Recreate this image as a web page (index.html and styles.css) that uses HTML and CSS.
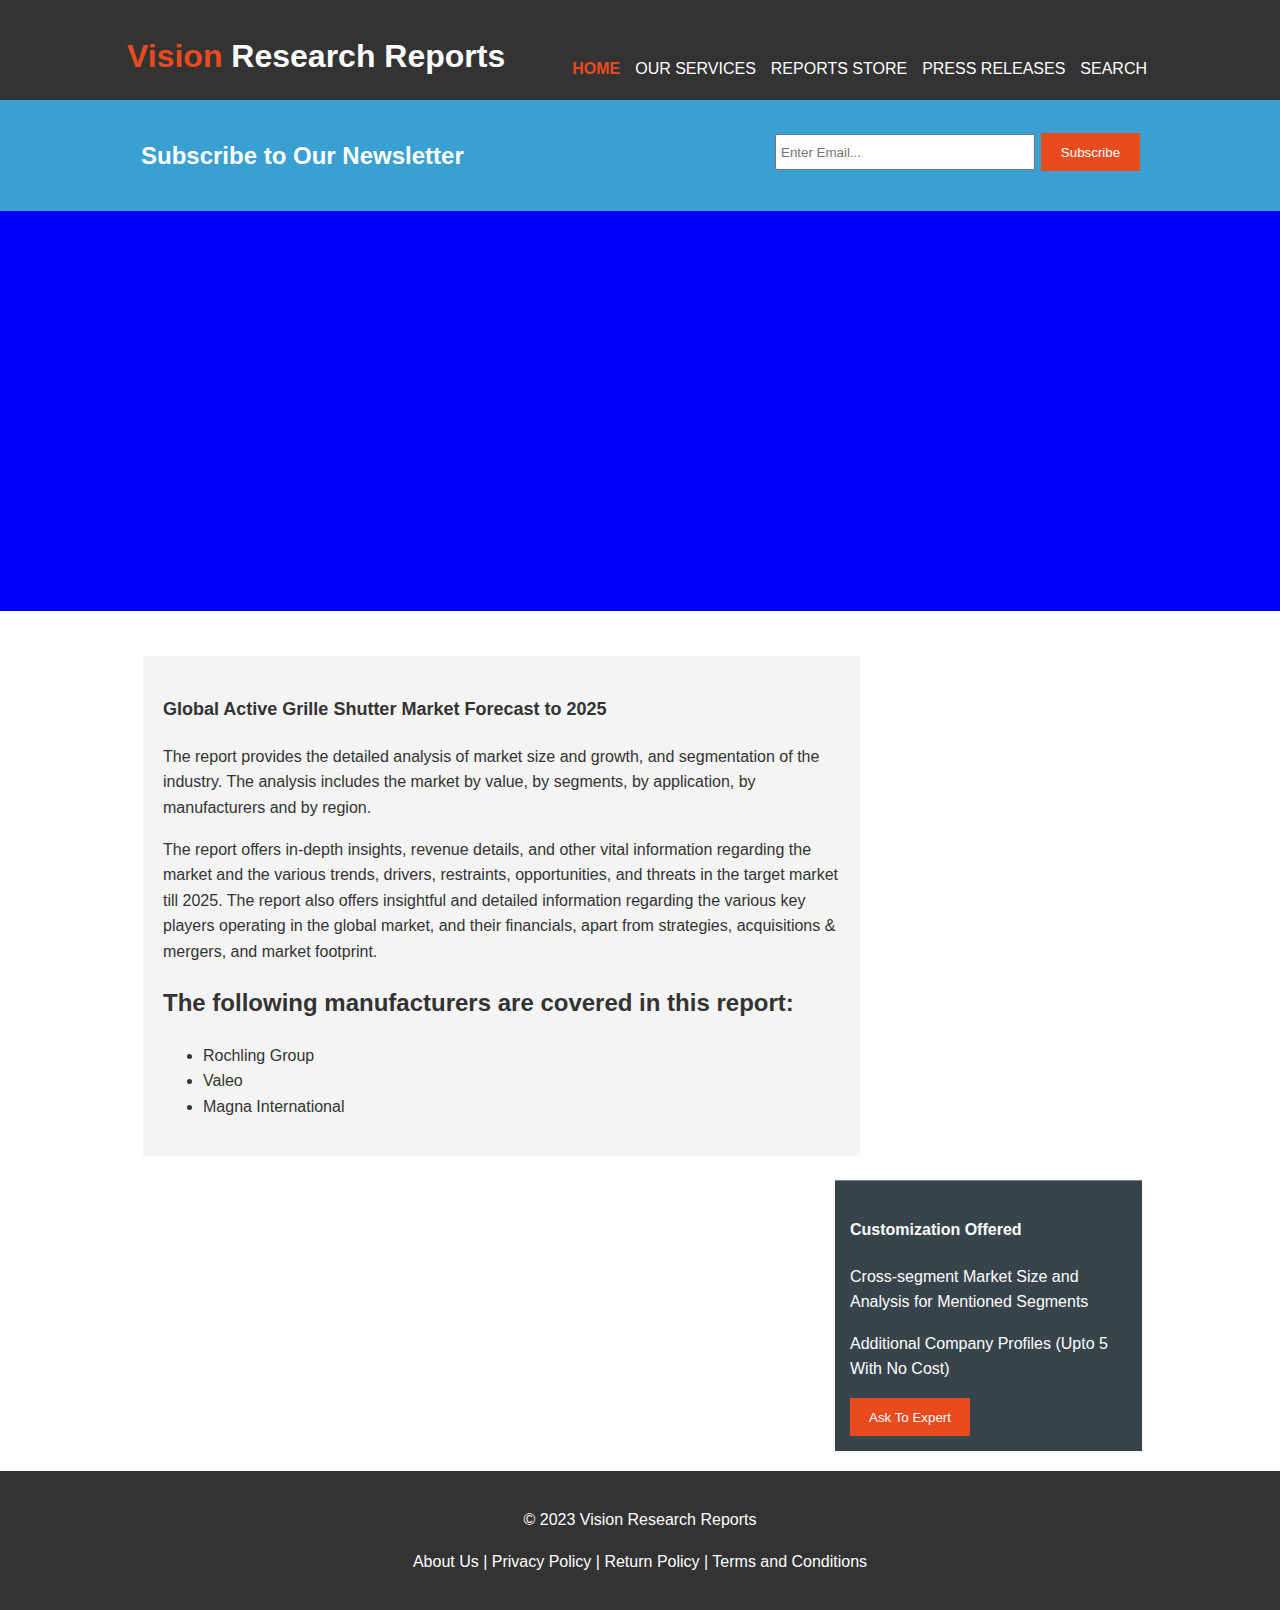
FILE: index.html
```html
<!DOCTYPE html>
<html lang="en">
<head>
<meta charset="utf-8">
<title>Vision Research Reports</title>
<link rel="stylesheet" href="styles.css">
</head>
<body>
<header class="site-header">
  <h1 class="logo"><span class="logo-accent">Vision</span> Research Reports</h1>
  <nav class="main-nav">
    <a class="nav-link active" href="#">HOME</a>
    <a class="nav-link" href="#">OUR SERVICES</a>
    <a class="nav-link" href="#">REPORTS STORE</a>
    <a class="nav-link" href="#">PRESS RELEASES</a>
    <a class="nav-link" href="#">SEARCH</a>
  </nav>
</header>

<section class="newsletter">
  <h2 class="newsletter-title">Subscribe to Our Newsletter</h2>
  <form class="newsletter-form">
    <input class="email-input" type="email" placeholder="Enter Email...">
    <button class="btn subscribe-btn" type="button">Subscribe</button>
  </form>
</section>

<section class="hero"></section>

<main class="main">
  <article class="report-card">
    <h3 class="report-title">Global Active Grille Shutter Market Forecast to 2025</h3>
    <p>The report provides the detailed analysis of market size and growth, and segmentation of the industry. The analysis includes the market by value, by segments, by application, by manufacturers and by region.</p>
    <p>The report offers in-depth insights, revenue details, and other vital information regarding the market and the various trends, drivers, restraints, opportunities, and threats in the target market till 2025. The report also offers insightful and detailed information regarding the various key players operating in the global market, and their financials, apart from strategies, acquisitions &amp; mergers, and market footprint.</p>
    <h2 class="report-subtitle">The following manufacturers are covered in this report:</h2>
    <ul class="maker-list">
      <li>Rochling Group</li>
      <li>Valeo</li>
      <li>Magna International</li>
    </ul>
  </article>

  <aside class="sidebar">
    <h4 class="sidebar-title">Customization Offered</h4>
    <p>Cross-segment Market Size and Analysis for Mentioned Segments</p>
    <p>Additional Company Profiles (Upto 5 With No Cost)</p>
    <button class="btn expert-btn" type="button">Ask To Expert</button>
  </aside>
</main>

<footer class="site-footer">
  <p>&copy; 2023 Vision Research Reports</p>
  <p><a href="#">About Us</a> | <a href="#">Privacy Policy</a> | <a href="#">Return Policy</a> | <a href="#">Terms and Conditions</a></p>
</footer>
</body>
</html>
```

FILE: styles.css
```css
* { box-sizing: border-box; }

body {
  margin: 0;
  font-family: "Liberation Sans", Arial, sans-serif;
  color: #333;
  background: #fff;
}

/* Header */
.site-header {
  background: #333;
  height: 100px;
  display: flex;
  justify-content: space-between;
  align-items: flex-start;
  padding: 0 133px 0 127px;
}

.logo {
  margin: 38px 0 0;
  font-size: 32px;
  line-height: 37px;
  font-weight: 700;
  color: #fff;
}

.logo-accent { color: #e84b1e; }

.main-nav {
  display: flex;
  gap: 15px;
  margin-top: 60px;
}

.nav-link {
  color: #fff;
  text-decoration: none;
  font-size: 16px;
  line-height: 18px;
}

.nav-link.active {
  color: #e84b1e;
  font-weight: 700;
}

/* Newsletter */
.newsletter {
  background: #3a9fd1;
  height: 111px;
  display: flex;
  justify-content: space-between;
  align-items: center;
  padding: 0 140px 0 141px;
}

.newsletter-title {
  margin: 0;
  color: #fff;
  font-size: 24px;
  line-height: 28px;
  font-weight: 700;
}

.newsletter-form {
  display: flex;
  align-items: center;
  gap: 6px;
  margin: 0 0 7px;
}

.email-input {
  width: 260px;
  height: 36px;
  border: 1px solid #767676;
  border-radius: 2px;
  padding: 0 5px;
  font-family: "Liberation Sans", Arial, sans-serif;
  font-size: 13.33px;
  background: #fff;
}

.email-input::placeholder { color: #757575; }

.btn {
  background: #e84b1e;
  color: #fff;
  border: none;
  height: 38px;
  font-family: "Liberation Sans", Arial, sans-serif;
  font-size: 13.33px;
  cursor: pointer;
}

.subscribe-btn { width: 99px; padding: 0; }

/* Hero */
.hero {
  background: #0000ff;
  height: 400px;
}

/* Main */
.main {
  width: 999px;
  margin-left: 143px;
  padding: 45px 0 20px;
  display: flex;
  flex-direction: column;
}

.report-card {
  width: 717px;
  background: #f4f4f4;
  padding: 20px;
  font-size: 16px;
  line-height: 1.6;
}

.report-card p { margin: 16px 0; }

.report-title {
  margin: 19px 0 20px;
  font-size: 18px;
  font-weight: 700;
}

.report-subtitle {
  margin: 19.92px 0;
  font-size: 24px;
  font-weight: 700;
}

.maker-list {
  margin: 16px 0;
  padding-left: 40px;
}

.sidebar {
  align-self: flex-end;
  width: 307px;
  margin-top: 24px;
  background: #37444b;
  border-top: 1px solid #7d8488;
  padding: 15px;
  color: #fff;
  font-size: 16px;
  line-height: 1.6;
}

.sidebar-title {
  margin: 21.28px 0;
  font-size: 16px;
  font-weight: 700;
}

.sidebar p { margin: 16px 0; }

.expert-btn {
  display: block;
  padding: 0 19px;
}

/* Footer */
.site-footer {
  background: #333;
  color: #fff;
  text-align: center;
  padding: 20px;
  font-size: 16px;
  line-height: 1.6;
}

.site-footer p { margin: 16px 0; }

.site-footer a {
  color: #fff;
  text-decoration: none;
}
```
